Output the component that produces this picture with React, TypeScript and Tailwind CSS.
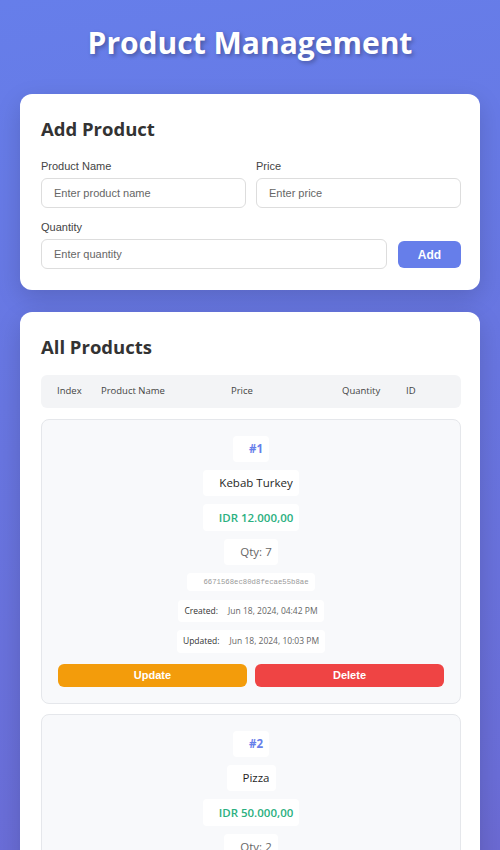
import React from 'react';

type Product = {
    id: string;
    name: string;
    price: string;
    qty: number;
    created: string;
    updated: string;
};

const products: Product[] = [
    {
        id: '6671568ec80d8fecae55b8ae',
        name: 'Kebab Turkey',
        price: 'IDR 12.000,00',
        qty: 7,
        created: 'Jun 18, 2024, 04:42 PM',
        updated: 'Jun 18, 2024, 10:03 PM',
    },
    {
        id: '66715a2ec80d8fecae55b8b4',
        name: 'Pizza',
        price: 'IDR 50.000,00',
        qty: 2,
        created: 'Jun 18, 2024, 04:50 PM',
        updated: 'Jun 18, 2024, 09:12 PM',
    },
];

const sans = "font-['Open_Sans','Noto_Sans',sans-serif]";
const arial = "font-['Liberation_Sans',Arial,sans-serif]";

// each cell keeps an empty label slot on the left, like the mobile table layout
const Cell = ({ label, children, className }: { label?: string; children: React.ReactNode; className: string }) => (
    <div className={`flex items-center rounded bg-white px-1.5 ${className}`}>
        <span className="mr-2.5 text-[8.5px] text-[#333]">{label}</span>
        {children}
    </div>
);

const ProductCard = ({ p, index }: { p: Product; index: number }) => {
    return (
        <div className="flex flex-col items-center rounded-lg border border-[#e5e7eb] bg-[#f8f9fb] px-4 pt-4 pb-4">
            <Cell className="h-[26px]">
                <span className="text-[11.5px] font-bold text-[#667eea]">#{index + 1}</span>
            </Cell>
            <Cell className="mt-2 h-[26px]">
                <span className="text-[11.5px] font-medium text-[#1f1f1f]">{p.name}</span>
            </Cell>
            <Cell className="mt-2 h-[27px]">
                <span className="text-[11.5px] font-semibold text-[#2bb07f]">{p.price}</span>
            </Cell>
            <Cell className="mt-2 h-[26px]">
                <span className="text-[11.5px] text-[#666]">Qty: {p.qty}</span>
            </Cell>
            <Cell className="mt-2 h-[18px]">
                <span className="font-['Liberation_Mono',monospace] text-[7.3px] text-[#999]">{p.id}</span>
            </Cell>
            <Cell label="Created:" className="mt-[9px] h-[22px]">
                <span className="text-[8.5px] text-[#666]">{p.created}</span>
            </Cell>
            <Cell label="Updated:" className="mt-2 h-[23px]">
                <span className="text-[8.5px] text-[#666]">{p.updated}</span>
            </Cell>
            <div className={`mt-[11px] grid w-full grid-cols-2 gap-2 ${arial}`}>
                <button className="h-[23px] rounded-md bg-[#f39c0b] text-[11px] font-bold text-white">Update</button>
                <button className="h-[23px] rounded-md bg-[#ef4444] text-[11px] font-bold text-white">Delete</button>
            </div>
        </div>
    );
};

const inputCls = `mt-1 h-[30px] rounded-md border border-[#ddd] px-3 text-[11px] placeholder:text-[#666] ${arial}`;
const labelCls = `text-[11px] leading-[15px] text-[#444] ${arial}`;

const App = () => {
    return (
        <div className={`min-h-screen bg-[linear-gradient(170deg,#667eea_0px,#6a6dd7_850px,#764ba2_1600px)] px-5 pt-5 pb-10 ${sans}`}>
            <h1 className="text-center text-[30px] leading-[46px] font-bold text-white [text-shadow:2px_2px_4px_rgba(0,0,0,0.3)]">
                Product Management
            </h1>

            <div className="mt-[28px] rounded-xl bg-white pt-[21px] pr-[19px] pb-[21px] pl-[21px] shadow-[0_8px_24px_rgba(0,0,0,0.15)]">
                <h2 className="text-[18.5px] leading-7 font-bold text-[#333]">Add Product</h2>
                <div className="mt-4 grid grid-cols-2 gap-x-2.5">
                    <div className="flex flex-col">
                        <label className={labelCls}>Product Name</label>
                        <input placeholder="Enter product name" className={inputCls} />
                    </div>
                    <div className="flex flex-col">
                        <label className={labelCls}>Price</label>
                        <input placeholder="Enter price" className={inputCls} />
                    </div>
                </div>
                <div className="mt-3 flex items-end gap-[11px]">
                    <div className="flex flex-1 flex-col">
                        <label className={labelCls}>Quantity</label>
                        <input placeholder="Enter quantity" className={inputCls} />
                    </div>
                    <button className={`mb-px h-[27px] w-[63px] rounded-md bg-[#667eea] text-[12px] font-bold text-white ${arial}`}>
                        Add
                    </button>
                </div>
            </div>

            <div className="mt-[22px] rounded-xl bg-white pt-[21px] pr-[19px] pb-[21px] pl-[21px] shadow-[0_8px_24px_rgba(0,0,0,0.15)]">
                <h2 className="text-[18.5px] leading-7 font-bold text-[#333]">All Products</h2>
                <div className="mt-[14px] flex h-[33px] items-center rounded-md bg-[#f3f4f6] pl-4 text-[9.5px] text-[#444]">
                    <span className="w-[44px]">Index</span>
                    <span className="w-[130px]">Product Name</span>
                    <span className="w-[111px]">Price</span>
                    <span className="w-[64px]">Quantity</span>
                    <span>ID</span>
                </div>
                <div className="mt-[11px] flex flex-col gap-2.5">
                    {products.map((p, i) => (
                        <ProductCard key={p.id} p={p} index={i} />
                    ))}
                </div>
            </div>
        </div>
    );
};

export default App;
